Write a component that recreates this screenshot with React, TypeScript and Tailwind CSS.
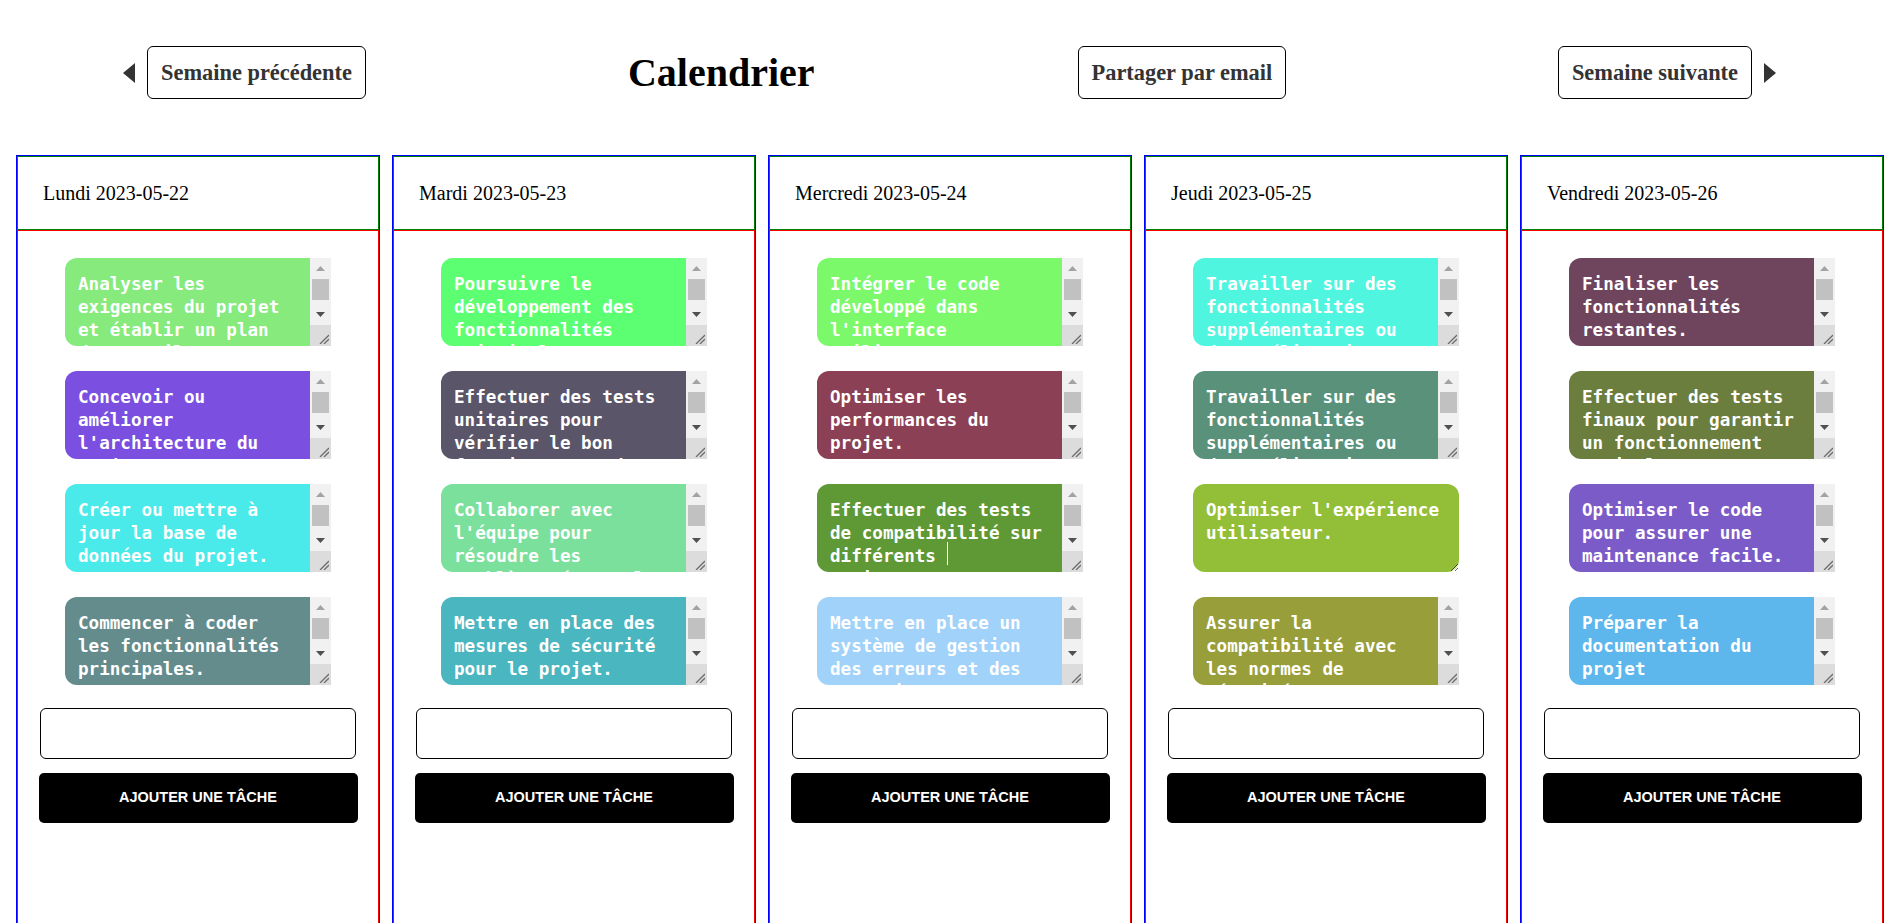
import { useState } from "react";

type Task = { text: string; color: string; fits?: boolean; caret?: boolean };
type Day = { label: string; tasks: Task[] };

const days: Day[] = [
  {
    label: "Lundi 2023-05-22",
    tasks: [
      { text: "Analyser les exigences du projet et établir un plan de travail.", color: "#86ea7c" },
      { text: "Concevoir ou améliorer l'architecture du projet.", color: "#7b4fe0" },
      { text: "Créer ou mettre à jour la base de données du projet.", color: "#4aeaea" },
      { text: "Commencer à coder les fonctionnalités principales.", color: "#648c8c" },
    ],
  },
  {
    label: "Mardi 2023-05-23",
    tasks: [
      { text: "Poursuivre le développement des fonctionnalités principales.", color: "#5cff72" },
      { text: "Effectuer des tests unitaires pour vérifier le bon fonctionnement du code.", color: "#5a5568" },
      { text: "Collaborer avec l'équipe pour résoudre les problèmes éventuels.", color: "#7be09b" },
      { text: "Mettre en place des mesures de sécurité pour le projet.", color: "#4ab6c0" },
    ],
  },
  {
    label: "Mercredi 2023-05-24",
    tasks: [
      { text: "Intégrer le code développé dans l'interface utilisateur.", color: "#7cf96a" },
      { text: "Optimiser les performances du projet.", color: "#8b4055" },
      {
        text: "Effectuer des tests de compatibilité sur différents navigateurs et appareils.",
        color: "#5e9935",
        caret: true,
      },
      { text: "Mettre en place un système de gestion des erreurs et des exceptions.", color: "#a0d2fa" },
    ],
  },
  {
    label: "Jeudi 2023-05-25",
    tasks: [
      { text: "Travailler sur des fonctionnalités supplémentaires ou des améliorations.", color: "#50f5e0" },
      { text: "Travailler sur des fonctionnalités supplémentaires ou des améliorations.", color: "#5a917a" },
      { text: "Optimiser l'expérience utilisateur.", color: "#93be37", fits: true },
      { text: "Assurer la compatibilité avec les normes de sécurité.", color: "#979e3a" },
    ],
  },
  {
    label: "Vendredi 2023-05-26",
    tasks: [
      { text: "Finaliser les fonctionnalités restantes.", color: "#6f455e" },
      { text: "Effectuer des tests finaux pour garantir un fonctionnement optimal.", color: "#6b7e3e" },
      { text: "Optimiser le code pour assurer une maintenance facile.", color: "#7b5bc8" },
      { text: "Préparer la documentation du projet", color: "#5db6ec" },
    ],
  },
];

// the browser hides native scrollbars, so the classic one is drawn by hand
function FakeScrollbar() {
  return (
    <div className="flex w-[21px] shrink-0 flex-col bg-[#f1f1f1]">
      <div className="flex h-[21px] items-center justify-center">
        <svg width="9" height="5" viewBox="0 0 9 5" aria-hidden>
          <polygon points="4.5,0 9,5 0,5" fill="#a3a3a3" />
        </svg>
      </div>
      <div className="h-[25px] px-[2px]">
        <div className="h-[21px] bg-[#c1c1c1]" />
      </div>
      <div className="flex h-[21px] items-center justify-center">
        <svg width="9" height="5" viewBox="0 0 9 5" aria-hidden>
          <polygon points="0,0 9,0 4.5,5" fill="#505050" />
        </svg>
      </div>
      <div className="relative h-[21px] bg-[#dcdcdc]">
        <svg className="absolute right-[2px] bottom-[2px]" width="10" height="10" viewBox="0 0 10 10" aria-hidden>
          <path d="M1 10 L10 1 M5 10 L10 5" stroke="#6a6a6a" strokeWidth="1.3" />
        </svg>
      </div>
    </div>
  );
}

const areaBase =
  "block h-[88px] border-0 px-[13px] py-[15px] font-['DejaVu_Sans_Mono',monospace] text-[17.6px] leading-[23px] font-bold text-white outline-none";

function TaskNote({ task }: { task: Task }) {
  if (task.fits) {
    return (
      <textarea
        defaultValue={task.text}
        style={{ backgroundColor: task.color }}
        className={`mx-auto w-[266px] rounded-[12px] ${areaBase}`}
      />
    );
  }
  return (
    <div className="relative mx-auto flex h-[88px] w-[266px]">
      <textarea
        defaultValue={task.text}
        style={{ backgroundColor: task.color }}
        className={`w-[245px] resize-none overflow-hidden rounded-l-[12px] ${areaBase}`}
      />
      <FakeScrollbar />
      {task.caret ? <span className="absolute top-[58px] left-[130px] h-[23px] w-px bg-white" /> : null}
    </div>
  );
}

function DayColumn({ day }: { day: Day }) {
  const [draft, setDraft] = useState("");

  return (
    <div className="w-[364px] shrink-0 border border-[#0000ff]">
      <div className="flex h-[74px] items-center border border-[#008000] pl-[25px] font-['Liberation_Serif',serif] text-[20px] text-black">
        {day.label}
      </div>
      <div className="h-[760px] border border-[#ff0000] pt-[27px]">
        <div className="flex flex-col gap-[25px]">
          {day.tasks.map((task, i) => (
            <TaskNote key={i} task={task} />
          ))}
        </div>
        <input
          value={draft}
          onChange={(e) => setDraft(e.target.value)}
          className="mx-[22px] mt-[23px] block h-[51px] w-[316px] rounded-[6px] border border-black bg-white px-3 outline-none"
        />
        <button className="mx-auto mt-[14px] block h-[50px] w-[319px] rounded-[5px] bg-black font-['Liberation_Sans',sans-serif] text-[14.5px] font-bold text-white uppercase">
          Ajouter une tâche
        </button>
      </div>
    </div>
  );
}

function Triangle({ dir }: { dir: "left" | "right" }) {
  return (
    <svg width="12" height="20" viewBox="0 0 12 20" aria-hidden>
      <polygon points={dir === "left" ? "12,0 0,10 12,20" : "0,0 12,10 0,20"} fill="#333" />
    </svg>
  );
}

const navBtn =
  "h-[53px] rounded-[6px] border border-black bg-white px-[13px] text-[22.4px] font-bold whitespace-nowrap text-[#333]";

export default function App() {
  return (
    <div className="min-h-screen bg-white">
      <header className="mt-[46px] flex h-[53px] items-center px-[123px] font-['Liberation_Serif',serif]">
        <div className="flex items-center gap-[12px]">
          <Triangle dir="left" />
          <button className={navBtn}>Semaine précédente</button>
        </div>
        <h1 className="ml-[262px] text-[40px] leading-none font-bold text-black">Calendrier</h1>
        <button className={`ml-[263px] ${navBtn}`}>Partager par email</button>
        <div className="ml-auto flex items-center gap-[12px]">
          <button className={navBtn}>Semaine suivante</button>
          <Triangle dir="right" />
        </div>
      </header>

      <main className="mt-[56px] flex gap-[12px] pl-[16px]">
        {days.map((day) => (
          <DayColumn key={day.label} day={day} />
        ))}
      </main>
    </div>
  );
}
